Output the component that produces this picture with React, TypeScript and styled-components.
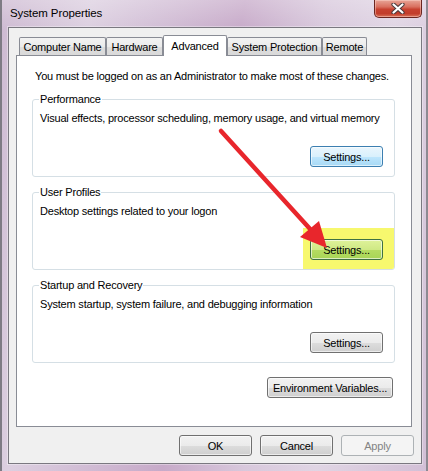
import * as React from "react";
import styled, { createGlobalStyle } from "styled-components";

const GlobalStyle = createGlobalStyle`
  html, body {
    margin: 0;
    padding: 0;
    background: #8c8c92;
  }
  body {
    font-family: "Liberation Sans", Arial, sans-serif;
    font-size: 11px;
    letter-spacing: -0.2px;
    color: #000000;
  }
`;

type ButtonKind = "plain" | "hot" | "marked" | "disabled";

const Window = styled.div`
  position: relative;
  width: 428px;
  height: 471px;
  box-sizing: border-box;
  display: flex;
  flex-direction: column;
  padding: 0 6px 7px 8px;
  background:
    linear-gradient(180deg, rgba(255, 255, 255, 0.25), rgba(255, 255, 255, 0) 30px),
    linear-gradient(100deg, #cdb9d1 0%, #dccfe0 18%, #d3c0d7 30%, #c7aac9 48%, #d8c8dc 64%, #e0d5e4 78%, #d2bfd6 100%);
  box-shadow: inset 2px 0 0 #7e7b84, inset -2px 0 0 #8d8a92;
  overflow: hidden;
`;

const TitleBar = styled.div`
  display: flex;
  align-items: flex-start;
  height: 27px;
  flex: 0 0 auto;
`;

const Title = styled.div`
  padding: 6px 0 0 2px;
  font-size: 11.5px;
  letter-spacing: -0.1px;
  line-height: 15px;
  color: #000000;
`;

const CloseButton = styled.div`
  margin-left: auto;
  width: 48px;
  height: 18px;
  box-sizing: border-box;
  display: flex;
  align-items: center;
  justify-content: center;
  border: 1px solid #6b2620;
  border-top: none;
  border-radius: 0 0 5px 5px;
  background: linear-gradient(180deg, #e8a597 0%, #d9705f 40%, #c7412f 55%, #c23d2b 80%, #d9735a 100%);
  box-shadow: inset 0 0 0 1px rgba(255, 220, 210, 0.45);
`;

const Client = styled.div`
  flex: 1 1 auto;
  display: flex;
  flex-direction: column;
  padding: 7px 7px 7px 7px;
  border: 1px solid #7a7880;
  background: #f0f0f0;
  box-shadow: 0 0 0 1px rgba(255, 255, 255, 0.35);
`;

const TabStrip = styled.div`
  position: relative;
  z-index: 1;
  display: flex;
  align-items: flex-end;
  height: 20px;
  padding-left: 3px;
`;

const Tab = styled.div<{ $width: number; $selected?: boolean }>`
  width: ${(p) => p.$width}px;
  height: ${(p) => (p.$selected ? 21 : 18)}px;
  margin-bottom: ${(p) => (p.$selected ? -1 : 0)}px;
  box-sizing: border-box;
  display: flex;
  align-items: center;
  justify-content: center;
  padding-top: ${(p) => (p.$selected ? 0 : 1)}px;
  border: 1px solid #898c95;
  border-bottom: none;
  border-radius: 2px 2px 0 0;
  background: ${(p) =>
    p.$selected
      ? "#ffffff"
      : "linear-gradient(180deg, #f3f3f3 0%, #ebebeb 50%, #dedede 51%, #d9d9d9 100%)"};
  white-space: nowrap;
  line-height: 14px;
`;

const Panel = styled.div`
  width: 396px;
  height: 372px;
  box-sizing: border-box;
  display: flex;
  flex-direction: column;
  align-items: stretch;
  padding: 13px 16px 0 15px;
  border: 1px solid #898c95;
  background: #ffffff;
`;

const Notice = styled.div`
  margin-left: 3px;
  line-height: 15px;
  white-space: nowrap;
`;

const Group = styled.fieldset<{ $gap: number }>`
  margin: ${(p) => p.$gap}px 0 0 0;
  padding: 5px 11px 9px 7px;
  min-width: 0;
  border: 1px solid #d5dfe5;
  border-radius: 3px;
`;

const Legend = styled.legend`
  padding: 0 1px;
  margin-left: -1px;
  line-height: 14px;
  white-space: nowrap;
`;

const Description = styled.div`
  line-height: 15px;
  white-space: nowrap;
`;

const GroupActions = styled.div`
  display: flex;
  justify-content: flex-end;
  margin-top: 20px;
`;

const Highlight = styled.div`
  display: flex;
  margin: -11px -11px -9px -7px;
  padding: 11px 11px 9px 7px;
  background: #f7f86e;
  border-radius: 0 0 2px 0;
`;

const buttonFill: Record<ButtonKind, string> = {
  plain: "linear-gradient(180deg, #f2f2f2 0%, #ebebeb 50%, #dddddd 51%, #cfcfcf 100%)",
  hot: "linear-gradient(180deg, #eaf6fd 0%, #d9f0fc 50%, #bee6fd 51%, #a7d9f5 100%)",
  marked: "linear-gradient(180deg, #dff29a 0%, #cfe985 50%, #b6dc62 51%, #a8d556 100%)",
  disabled: "#f4f4f4",
};

const buttonEdge: Record<ButtonKind, string> = {
  plain: "#707070",
  hot: "#3c7fb1",
  marked: "#3f7143",
  disabled: "#adb2b5",
};

const Button = styled.div<{ $kind?: ButtonKind; $width?: number }>`
  width: ${(p) => p.$width ?? 73}px;
  height: 21px;
  box-sizing: border-box;
  display: flex;
  align-items: center;
  justify-content: center;
  border: 1px solid ${(p) => buttonEdge[p.$kind ?? "plain"]};
  border-radius: 3px;
  background: ${(p) => buttonFill[p.$kind ?? "plain"]};
  box-shadow: inset 0 0 0 1px rgba(255, 255, 255, ${(p) => (p.$kind === "disabled" ? 0 : 0.6)});
  color: ${(p) => (p.$kind === "disabled" ? "#838383" : "#000000")};
  line-height: 14px;
  white-space: nowrap;
`;

const PanelFooter = styled.div`
  display: flex;
  justify-content: flex-end;
  margin: 14px 2px 0 0;
`;

const DialogButtons = styled.div`
  display: flex;
  justify-content: flex-end;
  gap: 8px;
  margin-top: 8px;
`;

const Annotation = styled.svg`
  position: absolute;
  left: 0;
  top: 0;
  pointer-events: none;
`;

type SectionProps = {
  title: string;
  text: string;
  gap: number;
  kind?: ButtonKind;
  marked?: boolean;
};

const Section = ({ title, text, gap, kind, marked }: SectionProps) => {
  const button = <Button $kind={kind}>Settings...</Button>;
  return (
    <Group $gap={gap}>
      <Legend>{title}</Legend>
      <Description>{text}</Description>
      <GroupActions>{marked ? <Highlight>{button}</Highlight> : button}</GroupActions>
    </Group>
  );
};

const tabs = [
  { label: "Computer Name", width: 87 },
  { label: "Hardware", width: 57 },
  { label: "Advanced", width: 64, selected: true },
  { label: "System Protection", width: 95 },
  { label: "Remote", width: 45 },
];

export default function App() {
  return (
    <>
      <GlobalStyle />
      <Window>
        <TitleBar>
          <Title>System Properties</Title>
          <CloseButton>
            <svg width="14" height="11" viewBox="0 0 14 11">
              <path d="M2.5 1.5 L11.5 9.5 M11.5 1.5 L2.5 9.5" stroke="#4a3a3c" strokeWidth="4.2" strokeLinecap="round" />
              <path d="M2.5 1.5 L11.5 9.5 M11.5 1.5 L2.5 9.5" stroke="#ffffff" strokeWidth="2.2" strokeLinecap="round" />
            </svg>
          </CloseButton>
        </TitleBar>
        <Client>
          <TabStrip>
            {tabs.map((t) => (
              <Tab key={t.label} $width={t.width} $selected={t.selected}>
                {t.label}
              </Tab>
            ))}
          </TabStrip>
          <Panel>
            <Notice>You must be logged on as an Administrator to make most of these changes.</Notice>
            <Section
              gap={8}
              title="Performance"
              text="Visual effects, processor scheduling, memory usage, and virtual memory"
              kind="hot"
            />
            <Section
              gap={8}
              title="User Profiles"
              text="Desktop settings related to your logon"
              kind="marked"
              marked
            />
            <Section
              gap={8}
              title="Startup and Recovery"
              text="System startup, system failure, and debugging information"
            />
            <PanelFooter>
              <Button $width={126}>Environment Variables...</Button>
            </PanelFooter>
          </Panel>
          <DialogButtons>
            <Button>OK</Button>
            <Button>Cancel</Button>
            <Button $kind="disabled">Apply</Button>
          </DialogButtons>
        </Client>
        <Annotation width="428" height="471" viewBox="0 0 428 471">
          <line x1="221" y1="131" x2="311" y2="230" stroke="#e8262c" strokeWidth="4.5" strokeLinecap="round" />
          <polygon points="327,248 319,221 300,237" fill="#e8262c" />
        </Annotation>
      </Window>
    </>
  );
}
